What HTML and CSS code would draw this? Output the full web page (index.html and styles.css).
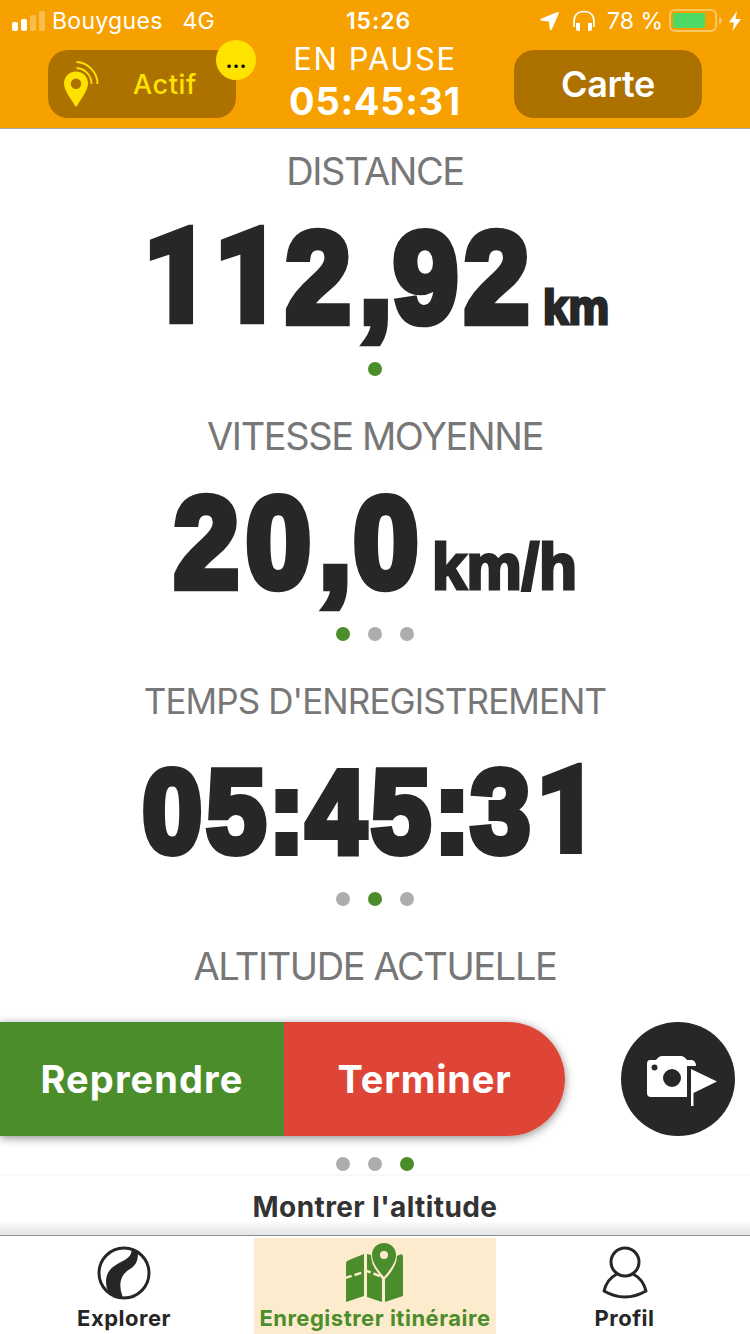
FILE: index.html
```html
<!DOCTYPE html>
<html lang="fr">
<head>
<meta charset="utf-8">
<title>Enregistrement</title>
<link rel="stylesheet" href="styles.css">
</head>
<body>
<div class="screen">
  <header class="header">
    <div class="status">
      <div class="status-side">
        <svg class="signal" width="34" height="20" viewBox="0 0 34 20"><g fill="#fff"><rect x="0" y="11" width="6" height="9" rx="2"/><rect x="9" y="8" width="6" height="12" rx="2"/><g opacity=".3"><rect x="18" y="4" width="6" height="16" rx="2"/><rect x="27" y="0" width="6" height="20" rx="2"/></g></g></svg>
        <span class="carrier">Bouygues</span><span class="network">4G</span>
      </div>
      <div class="clock">15:26</div>
      <div class="status-side status-right">
        <svg width="20" height="20" viewBox="0 0 20 20"><path d="M17.500 1 1.500 7.500q-2.500 1.500 0 2.300l7.500.7.700 7.500q.8 2.500 2.300 0L18.800 2.500q.2-1.800-1.300-1.500z" fill="#fff"/></svg>
        <svg class="phones" width="24" height="22" viewBox="0 0 24 22"><path d="M2 17V11.500C2 5 6 1.500 12 1.500S22 5 22 11.500V17" fill="none" stroke="#fff" stroke-width="1.700"/><path d="M4 13h4v8H6q-2 0-2-2zM16 13h4v6q0 2-2 2h-2z" fill="#fff"/></svg>
        <span class="percent">78 %</span>
        <svg class="battery" width="54" height="24" viewBox="0 0 54 24"><rect x="1" y="1" width="46" height="21" rx="5" fill="none" stroke="#fff" stroke-opacity=".4" stroke-width="2"/><path d="M50 8q3 1 3 3.500T50 15.500z" fill="#fff" fill-opacity=".4"/><rect x="4" y="4" width="32" height="15" fill="#4cd964"/></svg>
        <svg class="bolt" width="12" height="20" viewBox="0 0 12 20"><path d="M8 0 0 11.500h5L3.500 20 12 8H6.500z" fill="#fff"/></svg>
      </div>
    </div>
    <div class="toolbar">
      <button class="pill live">
        <svg width="36" height="46" viewBox="0 0 36 46"><path fill-rule="evenodd" d="M13 10.500c7 0 12 5.500 12 12 0 7-8 17-10.500 21.500q-1.500 3-3 0C9 39.500 1 29.500 1 22.500c0-6.500 5-12 12-12zm0 7a5.200 5.200 0 1 0 0 10.400 5.200 5.200 0 0 0 0-10.400z" fill="#ffe300"/><path d="M13.500 7C22 7.500 28.500 14.500 28.500 23M13.500 1C25 1.500 34.500 11.500 34.500 23" fill="none" stroke="#ffe300" stroke-width="1.800"/></svg>
        <span class="live-text">Actif</span>
        <span class="badge">...</span>
      </button>
      <div class="state"><div class="state-name">EN PAUSE</div><div class="state-time">05:45:31</div></div>
      <button class="pill map">Carte</button>
    </div>
  </header>

  <main class="metrics">
    <section class="metric">
      <h2 class="label distance">DISTANCE</h2>
      <svg class="value" width="750" height="145"><text class="digits" transform="translate(0 111.500) scale(.97 1.070)" x="146.400 219.600 294.500 370.500 405.500 478.500"><tspan class="one">11</tspan>2,92</text><text class="unit" x="543" y="113.500" font-size="49" textLength="66" lengthAdjust="spacingAndGlyphs">km</text></svg>
      <div class="dots"><i class="dot on"></i></div>
    </section>
    <section class="metric">
      <h2 class="label speed">VITESSE MOYENNE</h2>
      <svg class="value" width="750" height="145"><text class="digits" transform="translate(0 111.500) scale(.97 1.070)" x="179.500 253.500 329 364.500">20,0</text><text class="unit" x="432" y="113.500" font-size="64" textLength="145" lengthAdjust="spacingAndGlyphs">km/h</text></svg>
      <div class="dots"><i class="dot on"></i><i class="dot"></i><i class="dot"></i></div>
    </section>
    <section class="metric">
      <h2 class="label time">TEMPS D'ENREGISTREMENT</h2>
      <svg class="value" width="750" height="145"><text class="digits" transform="translate(0 111.500) scale(.89 .980)" x="160 232 302 344 417 488 529 601">05:45:3<tspan class="one">1</tspan></text></svg>
      <div class="dots"><i class="dot"></i><i class="dot on"></i><i class="dot"></i></div>
    </section>
    <section class="metric">
      <h2 class="label altitude">ALTITUDE ACTUELLE</h2>
      <div class="value-space"></div>
      <div class="dots"><i class="dot"></i><i class="dot"></i><i class="dot on"></i></div>
    </section>
    <div class="controls">
      <div class="actions"><button class="action resume">Reprendre</button><button class="action finish">Terminer</button></div>
      <button class="camera"><svg width="72" height="54" viewBox="0 0 72 54"><path fill="#fff" fill-rule="evenodd" d="M4 5h6q3-4 6-4h19q3 0 6 4h5q4 1 4 6h-9v31H5q-4 0-4-4V9q0-4 3-4zm4.500 4.500a3 3 0 1 0 0 6 3 3 0 0 0 0-6zM26 14a9 9 0 1 0 0 18 9 9 0 0 0 0-18z"/><path fill="#fff" d="m45 14 26 12.500L47.500 38v13H45z"/></svg></button>
    </div>
  </main>

  <button class="show-altitude"><span>Montrer l'altitude</span></button>
  <nav class="tabs">
    <a class="tab explorer"><svg width="54" height="54" viewBox="0 0 54 54"><circle cx="27" cy="27" r="25" fill="none" stroke="#262626" stroke-width="3"/><path d="M34.500 3C36 18 9 14 9 36q0 5 2 9 6 7 15 7-7-18 4-27c9-5 11-10 11-18z" fill="#262626"/></svg><span>Explorer</span></a>
    <a class="tab record"><svg width="60" height="61" viewBox="0 0 60 61"><g fill="#4c8d2b"><path d="M1 20q0-2 3-3l15-6v42L1 59zM22 11l4 1q0 10 8 19l3 5v23l-15-5zM40 36c8-8 12-16 12-23q6-4 6 1v39l-18 6z"/><path fill-rule="evenodd" d="M39 0c7 0 12 5 12 12 0 8-7 16-12 22-5-6-12-14-12-22C27 5 32 0 39 0zm0 8a4 4 0 1 0 0 8 4 4 0 0 0 0-8z"/></g><path d="m0 35 22-7 13 5" fill="none" stroke="#fdebcd" stroke-width="2.500" stroke-dasharray="7 3"/></svg><span>Enregistrer itinéraire</span></a>
    <a class="tab profile"><svg width="48" height="54" viewBox="0 0 48 54"><g fill="none" stroke="#262626" stroke-width="3"><circle cx="24" cy="16" r="14"/><path d="M16 28Q6 33 3 45q21 12 42 0Q42 33 32 28" stroke-linejoin="round"/></g></svg><span>Profil</span></a>
  </nav>
</div>
</body>
</html>
```
FILE: styles.css
```css
* { box-sizing: border-box; }
body { margin: 0; background: #fff; font-family: Inter, sans-serif; }
button { border: 0; padding: 0; font-family: inherit; }
.screen { width: 750px; height: 1334px; display: flex; flex-direction: column; overflow: hidden; }
.header { height: 129px; background: #f7a100; border-bottom: 1px solid #aaa; color: #fff; }
.status { height: 40px; display: grid; grid-template-columns: 1fr 80px 1fr; align-items: center; padding: 1px 9px 0 12px; font-size: 23px; }
.status-side { display: flex; align-items: center; }
.status-right { justify-content: flex-end; }
.carrier { margin-left: 6px; letter-spacing: .3px; }
.network { margin-left: 20px; }
.clock { position: relative; left: 2px; text-align: center; font-weight: 600; letter-spacing: .9px; }
.phones { margin-left: 12px; }
.percent { margin-left: 11px; white-space: nowrap; }
.battery { margin-left: 6px; }
.bolt { margin-left: 6px; }
.toolbar { display: grid; grid-template-columns: 188px 1fr 188px; padding: 0 48px; height: 88px; }
.pill { height: 68px; margin-top: 10px; border-radius: 20px; background: #ad7100; color: #fff; }
.live { position: relative; display: flex; align-items: center; padding-left: 15px; color: #ffe300; }
.live-text { margin-left: 34px; font-size: 27px; font-weight: 500; letter-spacing: .6px; }
.badge { position: absolute; right: -20px; top: -10px; width: 40px; height: 40px; border-radius: 50%; background: #ffe300; color: #000; font-size: 22px; line-height: 40px; text-align: center; font-weight: 600; }
.map { font-size: 36px; font-weight: 600; letter-spacing: -.4px; }
.state { text-align: center; }
.state-name { height: 38px; line-height: 38px; font-size: 31px; letter-spacing: 1.6px; }
.state-time { height: 46px; line-height: 46px; font-size: 38px; font-weight: 700; letter-spacing: .7px; }
.metrics { position: relative; height: 1047px; overflow: hidden; }
.metric { height: 265px; }
.label { margin: 0; height: 81px; line-height: 85px; text-align: center; font-size: 38px; font-weight: 400; letter-spacing: -1.4px; color: #777; white-space: nowrap; }
.time { font-size: 35px; letter-spacing: -.9px; }
.value, .value-space { display: block; height: 145px; overflow: visible; }
.digits, .unit { font-family: "Liberation Sans", Arial, sans-serif; font-weight: 700; fill: #272727; stroke: #272727; }
.digits { font-size: 120px; stroke-width: 8px; }
.one { font-family: Roboto, sans-serif; font-size: 124px; font-weight: 900; stroke-width: 4px; }
.unit { stroke-width: 3px; }
.dots { height: 28px; display: flex; justify-content: center; align-items: center; gap: 18px; }
.dot { width: 14px; height: 14px; border-radius: 50%; background: #adadad; }
.dot.on { background: #4c8d2b; }
.controls { position: absolute; top: 893px; left: 0; width: 735px; display: flex; justify-content: space-between; }
.actions { display: flex; width: 565px; height: 114px; border-radius: 0 57px 57px 0; overflow: hidden; box-shadow: 0 2px 10px rgba(0,0,0,.45); }
.action { color: #fff; font-size: 38px; font-weight: 700; letter-spacing: 1.1px; }
.resume { width: 284px; background: #4c8d2b; }
.finish { width: 281px; background: #df4537; letter-spacing: .8px; }
.camera { width: 114px; height: 114px; border-radius: 50%; background: #272727; display: flex; align-items: center; justify-content: center; padding: 5px 0 0 7px; }
.show-altitude { height: 59px; background: linear-gradient(#fff 75%, #e4e4e4); box-shadow: 0 -1px 3px rgba(0,0,0,.05); color: #333; font-size: 28px; font-weight: 700; letter-spacing: .4px; padding-top: 3px; position: relative; }
.tabs { height: 99px; border-top: 1px solid #929292; display: grid; grid-template-columns: 248px 254px 248px; background: #fff; }
.tab { display: flex; flex-direction: column; align-items: center; justify-content: space-between; height: 96px; margin-top: 2px; color: #262626; font-size: 22px; font-weight: 700; line-height: 28px; letter-spacing: .5px; white-space: nowrap; padding: 8px 0 2px; }
.record { width: 242px; margin-left: 6px; background: #fdebcd; color: #4c8d2b; padding-top: 5px; }
.profile { padding-right: 3px; }
```
